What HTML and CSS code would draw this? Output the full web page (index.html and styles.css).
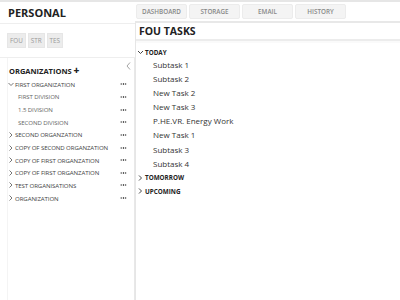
FILE: index.html
```html
<!DOCTYPE html>
<html>
<head>
<meta charset="utf-8">
<link rel="stylesheet" href="styles.css">
</head>
<body>
<div class="app">
  <aside class="side">
    <div class="side-head">PERSONAL</div>
    <div class="tags">
      <span class="tag">FOU</span><span class="tag">STR</span><span class="tag">TES</span>
    </div>
    <div class="orgs">
      <div class="orgs-head"><span>ORGANIZATIONS <b class="plus">+</b></span><svg class="collapse" width="5" height="8" viewBox="0 0 5 8"><path d="M4 0.5 L1 4 L4 7.5" fill="none" stroke="#999" stroke-width="0.9"/></svg></div>
      <ul class="tree">
        <li class="org"><svg class="car" width="6" height="5" viewBox="0 0 6 5"><path d="M0.5 1 L3 3.5 L5.5 1" fill="none" stroke="#555" stroke-width="0.8"/></svg><span class="name">FIRST ORGANIZATION</span><span class="dots"></span></li>
        <li class="div"><span class="name">FIRST DIVISION</span><span class="dots"></span></li>
        <li class="div"><span class="name">1.5 DIVISION</span><span class="dots"></span></li>
        <li class="div"><span class="name">SECOND DIVISION</span><span class="dots"></span></li>
        <li class="org"><svg class="car" width="6" height="6" viewBox="0 0 6 6"><path d="M1.5 0.5 L4 3 L1.5 5.5" fill="none" stroke="#555" stroke-width="0.8"/></svg><span class="name">SECOND ORGANZATION</span><span class="dots"></span></li>
        <li class="org"><svg class="car" width="6" height="6" viewBox="0 0 6 6"><path d="M1.5 0.5 L4 3 L1.5 5.5" fill="none" stroke="#555" stroke-width="0.8"/></svg><span class="name">COPY OF SECOND ORGANZATION</span><span class="dots"></span></li>
        <li class="org"><svg class="car" width="6" height="6" viewBox="0 0 6 6"><path d="M1.5 0.5 L4 3 L1.5 5.5" fill="none" stroke="#555" stroke-width="0.8"/></svg><span class="name">COPY OF FIRST ORGANZATION</span><span class="dots"></span></li>
        <li class="org"><svg class="car" width="6" height="6" viewBox="0 0 6 6"><path d="M1.5 0.5 L4 3 L1.5 5.5" fill="none" stroke="#555" stroke-width="0.8"/></svg><span class="name">COPY OF FIRST ORGANZATION</span><span class="dots"></span></li>
        <li class="org"><svg class="car" width="6" height="6" viewBox="0 0 6 6"><path d="M1.5 0.5 L4 3 L1.5 5.5" fill="none" stroke="#555" stroke-width="0.8"/></svg><span class="name">TEST ORGANISATIONS</span><span class="dots"></span></li>
        <li class="org"><svg class="car" width="6" height="6" viewBox="0 0 6 6"><path d="M1.5 0.5 L4 3 L1.5 5.5" fill="none" stroke="#555" stroke-width="0.8"/></svg><span class="name">ORGANIZATION</span><span class="dots"></span></li>
      </ul>
    </div>
  </aside>
  <main class="main">
    <nav class="tabs">
      <span class="tab">DASHBOARD</span><span class="tab">STORAGE</span><span class="tab">EMAIL</span><span class="tab">HISTORY</span>
    </nav>
    <div class="panel">
      <h1 class="title">FOU TASKS</h1>
      <div class="group first"><svg class="car" width="7" height="5" viewBox="0 0 7 5"><path d="M1 1 L3.5 3.5 L6 1" fill="none" stroke="#333" stroke-width="0.9"/></svg>TODAY</div>
      <ul class="tasks">
        <li>Subtask 1</li>
        <li>Subtask 2</li>
        <li>New Task 2</li>
        <li>New Task 3</li>
        <li>P.HE.VR. Energy Work</li>
        <li>New Task 1</li>
        <li>Subtask 3</li>
        <li>Subtask 4</li>
      </ul>
      <div class="group"><svg class="car" width="7" height="6" viewBox="0 0 7 6"><path d="M2 0.5 L4.5 3 L2 5.5" fill="none" stroke="#333" stroke-width="0.9"/></svg>TOMORROW</div>
      <div class="group"><svg class="car" width="7" height="6" viewBox="0 0 7 6"><path d="M2 0.5 L4.5 3 L2 5.5" fill="none" stroke="#333" stroke-width="0.9"/></svg>UPCOMING</div>
    </div>
  </main>
</div>
</body>
</html>
```

FILE: styles.css
```css
* { box-sizing: border-box; }
html, body { margin: 0; padding: 0; }
body {
  width: 400px; height: 300px; overflow: hidden;
  font-family: "Open Sans", "DejaVu Sans", sans-serif;
  color: #333; background: #fff;
  border-top: 2px solid #e6e6e6;
}
.app { display: flex; height: 298px; }
.side { width: 135px; flex: none; display: flex; flex-direction: column; }
.side-head {
  height: 22px; padding: 3px 0 0 8px;
  font-size: 11px; font-weight: 700; color: #222;
  border-bottom: 1px solid #eee;
}
.tags { display: flex; gap: 2px; padding: 9px 0 0 7px; height: 34px; border-bottom: 1px solid #eee; }
.tag {
  height: 15px; padding: 0 2px; background: #ececec; border: 1px solid #e6e6e6;
  font-size: 6.3px; color: #999; line-height: 13px;
}
.orgs {
  flex: 1; margin: 0 0 0 7px; border-left: 1px solid #f4f4f4; border-right: 1px solid #e8e8e8;
}
.orgs-head {
  display: flex; justify-content: space-between; align-items: center;
  padding: 3px 3px 0 1px; height: 20px;
  font-size: 7.5px; font-weight: 700; color: #222;
}
.plus { font-size: 10px; }
.collapse { margin-top: -7px; }
.tree { list-style: none; margin: 0; padding: 0; }
.tree li {
  display: flex; align-items: center; height: 12.65px;
  font-size: 6.1px; color: #444; padding-right: 7px; letter-spacing: -0.1px;
}
.tree li .name { flex: 1; }
.tree li .car { flex: none; margin-right: 1px; }
.tree li.div { padding-left: 10px; color: #666; }
.dots {
  width: 7px; height: 2px; flex: none;
  background-image: radial-gradient(circle, #555 0.7px, transparent 0.95px);
  background-size: 2.3px 2px;
}
.main { flex: 1; display: flex; flex-direction: column; }
.tabs { display: flex; gap: 2px; padding: 2px 0 0 1px; height: 21px; border-bottom: 2px solid #e8e8e8; }
.tab {
  width: 51px; height: 15px; background: #f4f4f4; border: 1px solid #ececec; border-radius: 2px;
  font-size: 6.3px; font-weight: 600; color: #888; text-align: center; line-height: 13px;
}
.panel { flex: 1; border-left: 1px solid #e6e6e6; }
.title {
  margin: 0; height: 18px; padding: 1px 0 0 3px;
  font-size: 10.5px; font-weight: 700; color: #222;
  border-bottom: 2px solid #ececec; box-shadow: 0 2px 0 #fafafa;
}
.group { display: flex; align-items: center; height: 13.5px; padding-left: 1px; font-size: 6.3px; font-weight: 700; color: #222; }
.group.first { margin-top: 5px; height: 12px; }
.group .car { flex: none; margin-right: 1px; }
.tasks { list-style: none; margin: 0; padding: 0 0 0 17px; }
.tasks li { height: 14.1px; line-height: 14.1px; font-size: 8px; color: #333; }
```
